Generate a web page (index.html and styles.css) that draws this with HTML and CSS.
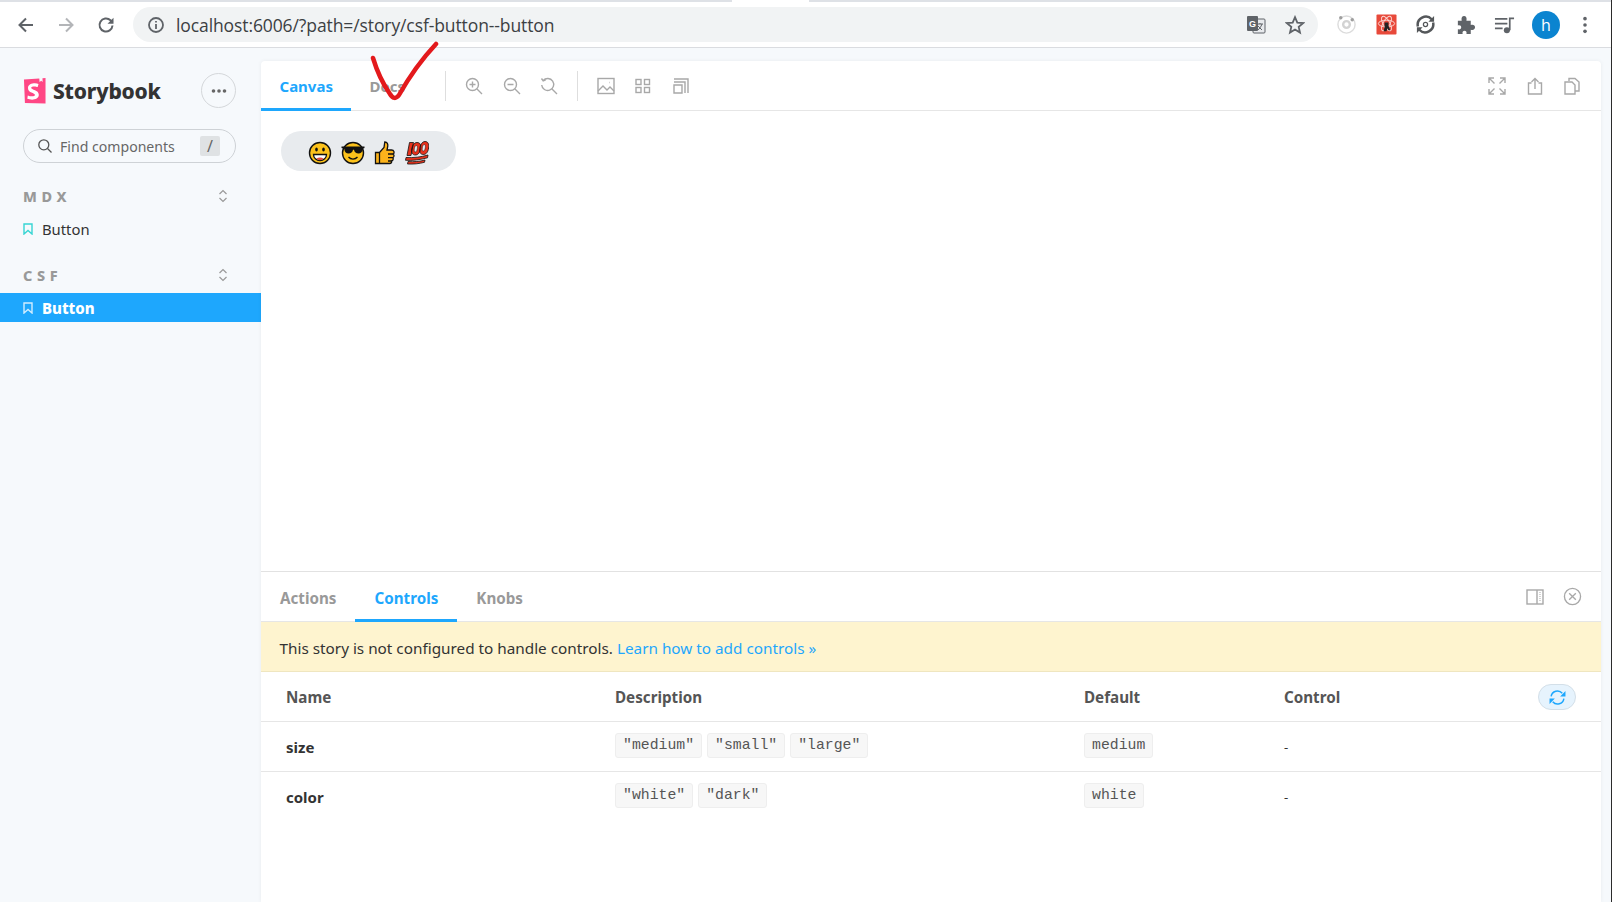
FILE: index.html
```html
<!DOCTYPE html>
<html lang="en">
<head>
<meta charset="utf-8">
<title>Storybook</title>
<link rel="stylesheet" href="styles.css">
</head>
<body>
<div class="tabstrip"><span class="tab-gap"></span></div>
<header class="browser">
  <svg class="nav" viewBox="0 0 20 20"><path d="M17 10H4M10 3.500 3.500 10l6.500 6.500"/></svg>
  <svg class="nav nav-off" viewBox="0 0 20 20"><path d="M3 10h13M10 3.500l6.500 6.500-6.500 6.500"/></svg>
  <svg class="nav" viewBox="0 0 20 20"><path d="M16.500 10.500a6.500 6.500 0 1 1-2-5.200L16.500 7.500"/><path class="fill" d="M17.500 2.800v6h-6z"/></svg>
  <div class="omnibox">
    <svg class="info" viewBox="0 0 18 18"><circle cx="9" cy="9" r="7"/><path d="M9 8v5M9 5v1.600"/></svg>
    <span class="url">localhost:6006/?path=/story/csf-button--button</span>
    <svg class="omni-translate" viewBox="0 0 20 20"><rect class="tr-back" x="7" y="4" width="12" height="14" rx="1"/><rect class="tr-front" x="1" y="1" width="11" height="15" rx="1"/><text class="tr-g" x="3" y="12">G</text><path class="tr-k" d="M11 9h6M14 8v1M16 9c-1 3-3 5-4 6M12 11l4 4"/></svg>
    <svg class="omni-star" viewBox="0 0 20 20"><path d="M10 2.200l2.300 5.400 5.800.5-4.400 3.800 1.300 5.700L10 14.600l-5 3 1.300-5.700L1.900 8.100l5.800-.5z"/></svg>
  </div>
  <div class="extensions">
    <svg class="ext" viewBox="0 0 22 22"><circle class="ion-a" cx="11" cy="11" r="9"/><circle class="ion-b" cx="11" cy="11" r="3.500"/><circle class="ion-c" cx="5" cy="4" r="1.800"/><circle class="ion-c" cx="17" cy="6" r="1.800"/></svg>
    <svg class="ext" viewBox="0 0 22 22"><rect class="rx-bg" width="21" height="21" x=".5" y=".5" rx="1"/><ellipse class="rx-l" cx="11" cy="10" rx="8.500" ry="3.500"/><ellipse class="rx-l" cx="11" cy="10" rx="8.500" ry="3.500" transform="rotate(60 11 10)"/><ellipse class="rx-l" cx="11" cy="10" rx="8.500" ry="3.500" transform="rotate(120 11 10)"/><path class="rx-k" d="M9 9h4v3l2 5h-2l-1-2-1 3H8l1-4z"/></svg>
    <svg class="ext" viewBox="0 0 22 22"><path class="sync" d="M17.500 5.500A8.500 8.500 0 0 0 3 13M4.500 16.500A8.500 8.500 0 0 0 19 9"/><path class="sync-h" d="M20 2v6h-6zM2 20v-6h6z"/><circle class="sync-c" cx="11" cy="11" r="2.200"/></svg>
    <svg class="ext" viewBox="0 0 22 22"><path class="puzzle" d="M3 7h4c-.7-3 .5-5 2.500-5S12.700 4 12 7h4.500v4.500c3-.7 4.500.5 4.500 2.500s-1.500 3.200-4.500 2.500V21H12c.6-2.500-.6-3.500-2-3.500S7.400 18.500 8 21H3v-5c2.500.6 3.500-.6 3.500-2S5.500 11.400 3 12z"/></svg>
    <svg class="ext" viewBox="0 0 22 22"><path class="media" d="M1 5h13M1 10h13M1 15h8M16.500 17V4.500H21"/><circle class="media-dot" cx="13.500" cy="17" r="3.200"/></svg>
    <span class="avatar">h</span>
    <svg class="kebab" viewBox="0 0 6 22"><circle cx="3" cy="4" r="2"/><circle cx="3" cy="11" r="2"/><circle cx="3" cy="18" r="2"/></svg>
  </div>
</header>

<div class="app">
  <aside class="sidebar">
    <div class="brand">
      <div class="brand-name">
        <svg class="logo" viewBox="0 0 24 28"><path class="logo-bg" d="M1 2.500 17 1.500 17.300 5 19 3.800 20.500 5 20.300 1.200 23.500 1V27.500L2 27z"/><path class="logo-s" d="M8.500 11c0-1.500 5-1.700 6.800-.6l.9-3.300c-3-1.200-11-1-11 4.300 0 5.500 7.300 4.800 7.300 7.300 0 1.800-4.800 1.800-7.500.5l-.5 3.500c4 1.500 12 1.500 12-4.200C16.500 12.800 8.500 13.500 8.500 11z"/></svg>
        <span class="brand-text">Storybook</span>
      </div>
      <button class="menu-btn"><svg viewBox="0 0 16 4"><circle cx="2.500" cy="2" r="1.800"/><circle cx="8" cy="2" r="1.800"/><circle cx="13.500" cy="2" r="1.800"/></svg></button>
    </div>
    <div class="search">
      <svg class="search-icon" viewBox="0 0 16 16"><circle cx="6.800" cy="6.800" r="5"/><path d="M10.500 10.500l4 4"/></svg>
      <span class="search-text">Find components</span>
      <span class="kbd">/</span>
    </div>
    <div class="group group-mdx">
      <span class="group-title">M D X</span>
      <svg class="chev" viewBox="0 0 10 14"><path d="M1.500 5 5 1.500 8.500 5M1.500 9 5 12.500 8.500 9"/></svg>
    </div>
    <div class="item">
      <svg class="mark mark-teal" viewBox="0 0 10 12"><path d="M1 1h8v10L5 7.500 1 11z"/></svg>
      <span>Button</span>
    </div>
    <div class="group group-csf">
      <span class="group-title">C S F</span>
      <svg class="chev" viewBox="0 0 10 14"><path d="M1.500 5 5 1.500 8.500 5M1.500 9 5 12.500 8.500 9"/></svg>
    </div>
    <div class="item item-on">
      <svg class="mark mark-white" viewBox="0 0 10 12"><path d="M1 1h8v10L5 7.500 1 11z"/></svg>
      <span>Button</span>
    </div>
  </aside>

  <main class="panel">
    <nav class="toolbar">
      <span class="tab tab-on">Canvas</span>
      <span class="tab tab-docs">Docs</span>
      <span class="sep"></span>
      <div class="tools">
        <svg class="tool" viewBox="0 0 18 18"><circle cx="7.500" cy="7.500" r="6"/><path d="M12 12l5 5M7.500 4.500v6M4.500 7.500h6"/></svg>
        <svg class="tool" viewBox="0 0 18 18"><circle cx="7.500" cy="7.500" r="6"/><path d="M12 12l5 5M4.500 7.500h6"/></svg>
        <svg class="tool" viewBox="0 0 18 18"><path d="M3.200 3.500A6 6 0 1 1 1.700 8M12 12l5 5M1.500 1.500l1.700 2.400 2.500-1"/></svg>
      </div>
      <span class="sep"></span>
      <div class="tools">
        <svg class="tool" viewBox="0 0 18 18"><rect x="1" y="1.500" width="16" height="15"/><path d="M1 14l5-5 4 4 3-3 4 4M12.500 5.500h.5"/></svg>
        <svg class="tool" viewBox="0 0 18 18"><rect x="2" y="2.500" width="5" height="5"/><rect x="10.500" y="2.500" width="5" height="5"/><rect x="2" y="10.500" width="5" height="5"/><rect x="10.500" y="10.500" width="5" height="5"/></svg>
        <svg class="tool" viewBox="0 0 18 18"><path d="M2 2h14v14M2 5h11v11M2 8h8v8H2z"/></svg>
      </div>
      <div class="tools tools-right">
        <svg class="tool" viewBox="0 0 18 18"><path d="M1 6V1h5M12 1h5v5M17 12v5h-5M6 17H1v-5M1 1l5.500 5.500M17 1l-5.500 5.500M17 17l-5.500-5.500M1 17l5.500-5.500"/></svg>
        <svg class="tool" viewBox="0 0 18 18"><path d="M5.500 6H2.500v11h13V6h-3M9 12V1.500M5.500 5 9 1.500 12.500 5"/></svg>
        <svg class="tool" viewBox="0 0 18 18"><path d="M6 4V1.500h6l4 3.500v9h-3.500M2 5h7l3 3v9H2z"/></svg>
      </div>
    </nav>

    <section class="canvas">
      <div class="emoji-pill">
        <svg class="emoji emoji-a" viewBox="0 0 24 24"><circle class="e-face" cx="12" cy="12" r="10.500"/><ellipse class="e-ink" cx="8.500" cy="8.500" rx="1.300" ry="1.900"/><ellipse class="e-ink" cx="15.500" cy="8.500" rx="1.300" ry="1.900"/><path class="e-mouth" d="M5.500 13.500h13c0 3.500-2.800 6-6.500 6s-6.500-2.500-6.500-6z"/><path class="e-tongue" d="M8.500 17.500c2-1.200 5-1.200 7 0-.9 1.300-2.100 1.700-3.500 1.700s-2.600-.4-3.500-1.700z"/></svg>
        <svg class="emoji emoji-b" viewBox="0 0 24 24"><circle class="e-face" cx="12" cy="12" r="10.500"/><path class="e-ink" d="M.5 5.500h23v1.500l-1.700.7c-.5 3.500-2 4.800-4.300 4.800-2.500 0-4-1.300-4.500-3.800h-1c-.5 2.500-2 3.800-4.500 3.800-2.300 0-3.800-1.300-4.300-4.800L.5 7z"/><path class="e-line" d="M7.500 16c2.300 2.700 6.700 2.700 9 0"/></svg>
        <svg class="emoji emoji-c" viewBox="0 0 24 24"><path class="e-thumb" d="M2.500 11.500h4v11h-4zM6.500 11.500l4.500-5 .8-5.500c2.500 0 3.400 2 2.900 4.500L14 9h4.500c2.800 0 3.200 3 1.800 4 1.200 1.200.8 3-.4 3.600.8 1.400 0 3-1.200 3.400.3 1.400-.6 2.500-2 2.500H6.500z"/><path class="e-line" d="M15 13h5M15 16.700h5M15 20h4"/></svg>
        <svg class="emoji emoji-d" viewBox="0 0 24 24"><g class="e-hundred"><path d="M4.500 1.500H8.500L6 14.500H2zM12 1.500c3 0 4.200 2.200 3.600 6s-2.300 6.500-5.300 6.500-4.200-2.700-3.600-6 2.300-6.500 5.300-6.500zM20 .5c3 0 4.200 2.500 3.600 6.500s-2.300 6.500-5.300 6.500-4.200-2.700-3.600-6S17 .5 20 .5z"/><path d="M1 16.500c7.500.5 15-.5 22-2.500l-.5 2.800c-7.500 2-15 3-22 2.500zM3 20.500c6 .5 11.500 0 17-1.500l-.5 2.300c-5.500 1.500-11 2-17 1.700z"/></g><path class="e-hole" d="M11.300 4.500c1 0 1.300 1.200 1 3.200s-1 3.300-2 3.300-1.300-1.300-1-3.200 1-3.300 2-3.300zM19.300 3.500c1 0 1.300 1.300 1 3.300s-1 3.300-2 3.300-1.300-1.300-1-3.200 1-3.400 2-3.400z"/></svg>
      </div>
    </section>

    <section class="addons">
      <nav class="addon-tabs">
        <span class="atab">Actions</span>
        <span class="atab atab-on">Controls</span>
        <span class="atab">Knobs</span>
        <div class="addon-tools">
          <svg class="tool" viewBox="0 0 18 18"><rect x="1" y="2" width="16" height="14"/><path d="M11 2v14"/><path class="dots" d="M14 4v10"/></svg>
          <svg class="tool tool-close" viewBox="0 0 20 20"><circle cx="10" cy="10" r="8.500"/><path d="M6.500 6.500l7 7M13.500 6.500l-7 7"/></svg>
        </div>
      </nav>
      <div class="notice">This story is not configured to handle controls.&nbsp;<a class="notice-link" href="#">Learn how to add controls »</a></div>
      <div class="row row-head">
        <span class="col-name">Name</span>
        <span class="col-desc">Description</span>
        <span class="col-def">Default</span>
        <span class="col-ctl">Control</span>
        <button class="reset"><svg viewBox="0 0 16 16"><path d="M2 7a6 6 0 0 1 10.500-3M14 9a6 6 0 0 1-10.500 3"/><path class="fill" d="M15.500 1.800V7h-5zM.5 14.200V9h5z"/></svg></button>
      </div>
      <div class="row">
        <span class="col-name prop">size</span>
        <span class="col-desc codes"><code>"medium"</code><code>"small"</code><code>"large"</code></span>
        <span class="col-def codes"><code>medium</code></span>
        <span class="col-ctl dash">-</span>
      </div>
      <div class="row row-last">
        <span class="col-name prop">color</span>
        <span class="col-desc codes"><code>"white"</code><code>"dark"</code></span>
        <span class="col-def codes"><code>white</code></span>
        <span class="col-ctl dash">-</span>
      </div>
    </section>
  </main>
  <div class="gutter"></div>
</div>

<svg class="tick" viewBox="0 0 75 60"><path d="M6 17c3 10 10 26 17 36 3 5 6 5 9 1C41 38 55 18 69 3"/></svg>
</body>
</html>
```

FILE: styles.css
```css
* { box-sizing: border-box; }
html, body { margin: 0; height: 100%; }
body {
  width: 1612px; height: 902px; overflow: hidden; position: relative;
  display: flex; flex-direction: column;
  background: #f6f9fc; color: #333; border-right: 1px solid #2b2b2b;
  font-family: "Noto Sans", "Open Sans", sans-serif; font-size: 14px;
}
svg { display: block; flex: none; }

/* browser chrome */
.tabstrip { height: 2px; flex: none; background: #dee1e6; padding-left: 732px; }
.tab-gap { display: block; width: 77px; height: 2px; background: #fff; }
.browser {
  height: 46px; flex: none; display: flex; align-items: center;
  border-bottom: 1px solid #dadce0;
  background: #fff; padding-left: 16px;
}
.nav { width: 20px; height: 20px; margin-right: 20px; fill: none; stroke: #5f6368; stroke-width: 2; }
.nav .fill { fill: #5f6368; stroke: none; }
.nav-off { stroke: #b3b5b8; }
.omnibox {
  width: 1185px; height: 35px; margin-left: -3px; border-radius: 18px; background: #f1f3f4;
  display: flex; align-items: center; padding-left: 14px;
}
.info { width: 18px; height: 18px; fill: none; stroke: #5f6368; stroke-width: 1.800; }
.url { margin-left: 11px; font-family: "Open Sans", sans-serif; font-size: 17.500px; letter-spacing: -.1px; color: #3c4043; white-space: nowrap; }
.omni-translate { width: 20px; height: 20px; margin-left: auto; }
.tr-back { fill: #e8eaed; stroke: #5f6368; stroke-width: 1; }
.tr-front { fill: #5f6368; }
.tr-g { font: bold 9px "Liberation Sans", sans-serif; fill: #fff; }
.tr-k { fill: none; stroke: #5f6368; stroke-width: 1; }
.omni-star { width: 20px; height: 20px; margin-left: 19px; margin-right: 13px; fill: none; stroke: #5f6368; stroke-width: 1.800; }
.extensions { display: flex; align-items: center; margin-left: 18px; }
.ext { width: 21px; height: 21px; margin-right: 18.600px; }
.ion-a { fill: none; stroke: #dcdcdc; stroke-width: 1.500; }
.ion-b { fill: none; stroke: #d3d3d3; stroke-width: 2.500; }
.ion-c { fill: #9e9e9e; }
.rx-bg { fill: #e8493a; }
.rx-l { fill: none; stroke: #fbd8d4; stroke-width: 1; }
.rx-k { fill: #222; }
.sync { fill: none; stroke: #54575a; stroke-width: 2.600; }
.sync-h { fill: #54575a; }
.sync-c { fill: none; stroke: #54575a; stroke-width: 1.300; }
.puzzle { fill: #5f6368; }
.media { fill: none; stroke: #5f6368; stroke-width: 1.800; }
.media-dot { fill: #5f6368; }
.avatar {
  width: 28px; height: 28px; margin-left: -2px; border-radius: 50%; background: #0b84d0; color: #fff;
  display: flex; align-items: center; justify-content: center; font-size: 16px; font-family: "Open Sans", sans-serif;
}
.kebab { width: 6px; height: 20px; margin-left: 22px; fill: #5f6368; }

/* app */
.app { flex: 1; display: flex; min-height: 0; }
.sidebar { width: 261px; flex: none; display: flex; flex-direction: column; }
.brand { display: flex; align-items: center; justify-content: space-between; margin: 25px 25px 0 23px; height: 35px; }
.brand-name { display: flex; align-items: center; }
.logo { width: 23px; height: 27px; }
.logo-bg { fill: #ff4785; }
.logo-s { fill: #fff; }
.brand-text { margin-left: 7px; font-size: 21px; font-weight: 800; color: #333; letter-spacing: -.2px; }
.menu-btn {
  width: 35px; height: 35px; padding: 0; border-radius: 50%; background: transparent; border: 1px solid #d4d7da;
  display: flex; align-items: center; justify-content: center;
}
.menu-btn svg { width: 16px; height: 4px; fill: #666; }
.search {
  margin: 21px 25px 0 23px; height: 34px; border: 1px solid #ced2d6; border-radius: 17px;
  display: flex; align-items: center; padding: 0 15px 0 13px;
}
.search-icon { width: 16px; height: 16px; fill: none; stroke: #555; stroke-width: 1.300; }
.search-text { margin-left: 7px; font-size: 14.100px; color: #666; }
.kbd {
  margin-left: auto; width: 20px; height: 20px; border-radius: 2px; background: #dfe2e4; color: #666;
  display: flex; align-items: center; justify-content: center; font-size: 16px;
}
.group { display: flex; align-items: center; justify-content: space-between; margin: 0 33px 0 23px; height: 20px; }
.group-mdx { margin-top: 23px; }
.group-csf { margin-top: 22px; }
.group-title { font-size: 14.500px; font-weight: 800; color: #999; letter-spacing: .4px; }
.chev { width: 10px; height: 14px; fill: none; stroke: #999; stroke-width: 1.200; }
.item { display: flex; align-items: center; height: 29px; padding-left: 23px; margin-top: 8px; color: #333; font-size: 14.800px; }
.item span { margin-left: 9px; }
.mark { width: 10px; height: 12px; fill: none; stroke-width: 1.400; }
.mark-teal { stroke: #37d5d3; }
.mark-white { stroke: #fff; opacity: .8; }
.item-on { background: #1ea7fd; color: #fff; font-weight: 800; font-size: 15px; }

.panel {
  flex: 1; min-width: 0; margin-top: 13px; background: #fff; border-radius: 4px 4px 0 0;
  box-shadow: 0 0 4px rgba(0,0,0,.06);
  display: flex; flex-direction: column;
}
.gutter { width: 10px; flex: none; }

.toolbar { height: 50px; flex: none; display: flex; align-items: stretch; border-bottom: 1px solid #e6e6e6; }
.tab { display: flex; align-items: center; padding: 3px 19px 0 18.500px; font-size: 15px; font-weight: 700; color: #999; border-bottom: 3px solid transparent; margin-bottom: -1px; }
.tab-on { color: #1ea7fd; border-bottom-color: #1ea7fd; width: 90px; }
.tab-docs { width: 94px; }
.sep { width: 1px; height: 30px; align-self: center; background: #dedede; margin-right: 19px; }
.tools { display: flex; align-items: center; gap: 19.500px; margin-right: 18.500px; }
.tool { width: 18px; height: 18px; fill: none; stroke: #a8a8a8; stroke-width: 1.400; }
.tools-right { margin-left: auto; margin-right: 20px; }

.canvas { flex: 1; min-height: 0; padding: 20px 0 0 20px; }
.emoji-pill {
  width: 175px; height: 40px; border-radius: 20px; background: #e8ebee;
  display: flex; align-items: center; padding: 4px 0 0 27px;
}
.emoji { width: 24px; height: 24px; }
.emoji-b { margin-left: 9px; }
.emoji-c { margin-left: 8px; }
.emoji-d { margin-left: 8px; }
.e-face { fill: #fcc21b; stroke: #111; stroke-width: 1.400; }
.e-ink { fill: #111; }
.e-mouth { fill: #fff; stroke: #111; stroke-width: 1.300; }
.e-tongue { fill: #e04c3f; }
.e-line { fill: none; stroke: #111; stroke-width: 1.300; }
.e-thumb { fill: #fcb31b; stroke: #111; stroke-width: 1.300; }
.e-hundred { fill: #e8321c; stroke: #111; stroke-width: .8; }
.e-hole { fill: #e8ebee; stroke: #111; stroke-width: .5; }

.addons { height: 331px; flex: none; border-top: 1px solid #e2e2e2; display: flex; flex-direction: column; overflow: hidden; }
.addon-tabs { height: 50px; flex: none; display: flex; align-items: stretch; border-bottom: 1px solid #e6e6e6; }
.atab { display: flex; align-items: center; padding: 4px 19px 0; font-size: 15.200px; font-weight: 700; color: #999; border-bottom: 3px solid transparent; margin-bottom: -1px; }
.atab-on { color: #1ea7fd; border-bottom-color: #1ea7fd; }
.addon-tools { margin-left: auto; display: flex; align-items: center; gap: 19px; padding-right: 19px; }
.tool-close { width: 19px; height: 19px; }
.dots { stroke-dasharray: 1 1; stroke-width: 1; }
.notice { height: 50px; flex: none; display: flex; align-items: center; padding: 2px 0 0 18.500px; background: #fef4cf; border-bottom: 1px solid #efe6c0; font-size: 15.300px; color: #333; white-space: nowrap; }
.notice-link { color: #1ea7fd; text-decoration: none; }
.row { height: 50px; flex: none; display: flex; align-items: center; border-bottom: 1px solid #e6e6e6; position: relative; font-size: 15.200px; }
.row-last { border-bottom: 0; }
.row-head { font-weight: 700; color: #555; }
.col-name { width: 354px; padding-left: 25px; }
.col-desc { width: 469px; }
.col-def { width: 200px; }
.prop { font-weight: 700; color: #333; font-size: 15px; }
.codes { display: flex; gap: 5px; margin-top: -3px; }
code {
  font-family: "Liberation Mono", "DejaVu Sans Mono", monospace; font-size: 14.800px; line-height: 23px; height: 25px;
  padding: 0 7px; background: #f7f7f7; border: 1px solid #eee; border-radius: 3px; color: #555;
}
.dash { color: #333; font-size: 13px; }
.reset {
  position: absolute; right: 25px; top: 12px; width: 38px; height: 26px; padding: 0; border-radius: 13px;
  background: #e6f3fd; border: 1px solid #d3dfe8; display: flex; align-items: center; justify-content: center;
}
.reset svg { width: 17px; height: 17px; fill: none; stroke: #1ea7fd; stroke-width: 1.400; }
.reset .fill { fill: #1ea7fd; stroke: none; }

.tick { position: absolute; left: 367px; top: 41px; width: 75px; height: 60px; fill: none; stroke: #e3191c; stroke-width: 4.500; stroke-linecap: round; stroke-linejoin: round; }
```
